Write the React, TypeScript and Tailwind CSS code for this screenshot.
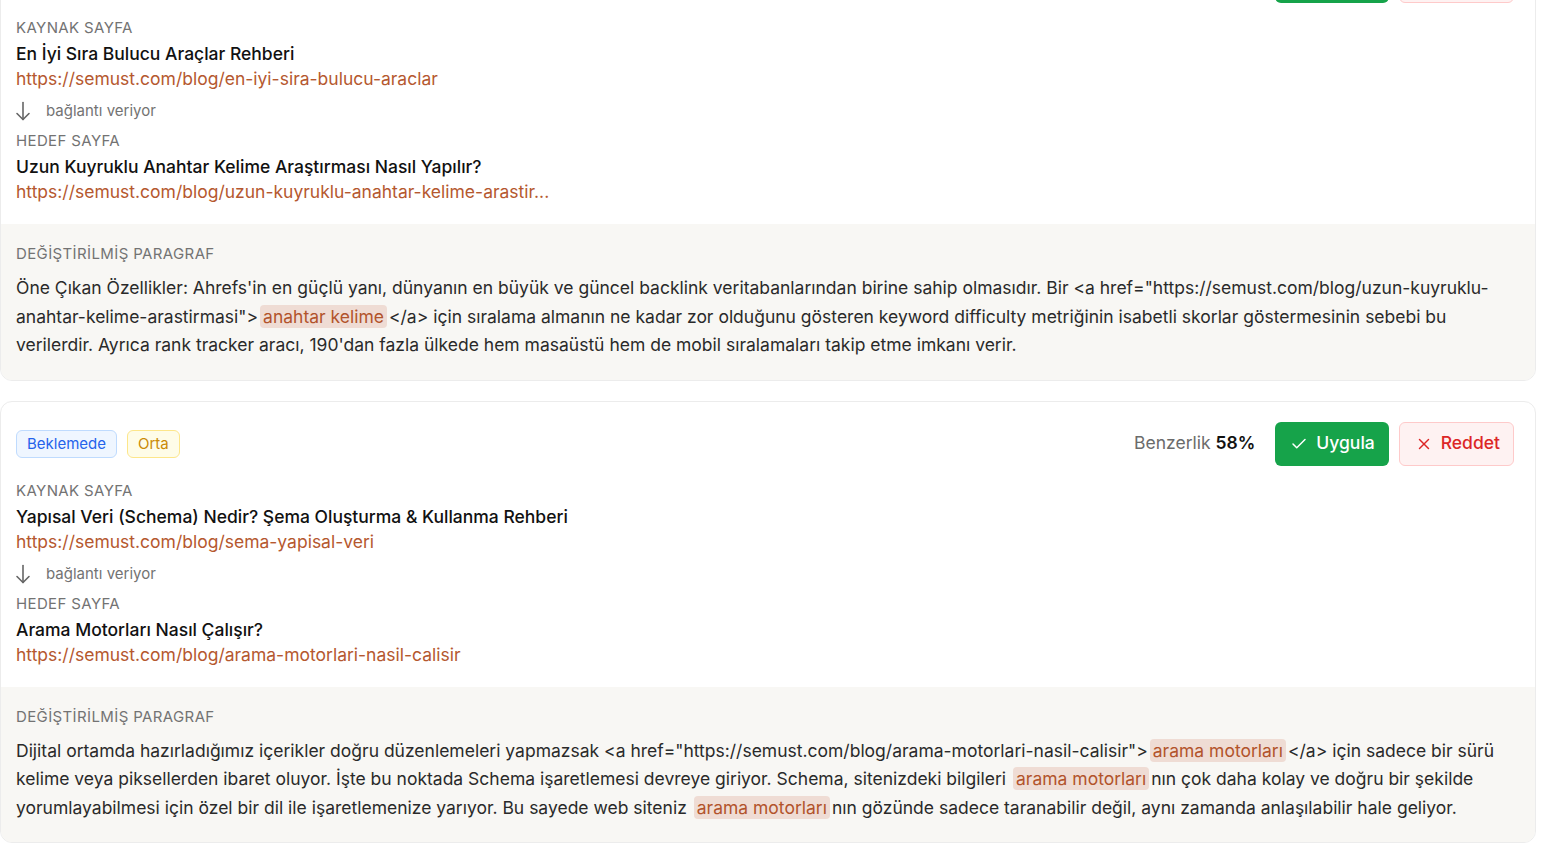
import { Check, X } from 'lucide-react'

type Part = string | { hl: string }

interface Suggestion {
  id: number
  status?: string
  level?: string
  similarity?: number
  sourceTitle: string
  sourceUrl: string
  targetTitle: string
  targetUrl: string
  paragraph: Part[]
}

const suggestions: Suggestion[] = [
  {
    id: 1,
    status: 'Beklemede',
    level: 'Orta',
    similarity: 61,
    sourceTitle: 'En İyi Sıra Bulucu Araçlar Rehberi',
    sourceUrl: 'https://semust.com/blog/en-iyi-sira-bulucu-araclar',
    targetTitle: 'Uzun Kuyruklu Anahtar Kelime Araştırması Nasıl Yapılır?',
    targetUrl: 'https://semust.com/blog/uzun-kuyruklu-anahtar-kelime-arastir...',
    paragraph: [
      'Öne Çıkan Özellikler: Ahrefs\'in en güçlü yanı, dünyanın en büyük ve güncel backlink veritabanlarından birine sahip olmasıdır. Bir <a href="https://semust.com/blog/uzun-kuyruklu-anahtar-kelime-arastirmasi">',
      { hl: 'anahtar kelime' },
      '</a> için sıralama almanın ne kadar zor olduğunu gösteren keyword difficulty metriğinin isabetli skorlar göstermesinin sebebi bu verilerdir. Ayrıca rank tracker aracı, 190\'dan fazla ülkede hem masaüstü hem de mobil sıralamaları takip etme imkanı verir.',
    ],
  },
  {
    id: 2,
    status: 'Beklemede',
    level: 'Orta',
    similarity: 58,
    sourceTitle: 'Yapısal Veri (Schema) Nedir? Şema Oluşturma & Kullanma Rehberi',
    sourceUrl: 'https://semust.com/blog/sema-yapisal-veri',
    targetTitle: 'Arama Motorları Nasıl Çalışır?',
    targetUrl: 'https://semust.com/blog/arama-motorlari-nasil-calisir',
    paragraph: [
      'Dijital ortamda hazırladığımız içerikler doğru düzenlemeleri yapmazsak <a href="https://semust.com/blog/arama-motorlari-nasil-calisir">',
      { hl: 'arama motorları' },
      '</a> için sadece bir sürü kelime veya piksellerden ibaret oluyor. İşte bu noktada Schema işaretlemesi devreye giriyor. Schema, sitenizdeki bilgileri ',
      { hl: 'arama motorları' },
      'nın çok daha kolay ve doğru bir şekilde yorumlayabilmesi için özel bir dil ile işaretlemenize yarıyor. Bu sayede web siteniz ',
      { hl: 'arama motorları' },
      'nın gözünde sadece taranabilir değil, aynı zamanda anlaşılabilir hale geliyor.',
    ],
  },
]

function LinkArrow() {
  return (
    <svg
      viewBox="0 0 24 24"
      className="-my-0.5 -ml-[5px] h-6 w-6 text-[#666]"
      fill="none"
      stroke="currentColor"
      strokeWidth={1.6}
      strokeLinecap="round"
      strokeLinejoin="round"
    >
      <path d="M12 3.5v17" />
      <path d="M18 14.5l-6 6-6-6" />
    </svg>
  )
}

function PageBlock({ label, title, url }: { label: string; title: string; url: string }) {
  return (
    <div>
      <div className="text-[15px] leading-5 tracking-wide text-[#737373] uppercase">{label}</div>
      <div className="mt-[3px] text-[17.5px] leading-[25px] font-medium text-[#111]">{title}</div>
      <div className="text-[17.5px] leading-[25px] text-[#b5582f]">{url}</div>
    </div>
  )
}

function SuggestionCard({ item, first }: { item: Suggestion; first?: boolean }) {
  return (
    <div
      className={`overflow-hidden rounded-xl border border-[#ececec] bg-white ${
        first ? '-mt-[62px]' : 'mt-5'
      }`}
    >
      <div className="pt-5 pr-[21px] pb-5 pl-[15px]">
        <div className="flex h-11 items-center justify-between">
          <div className="flex items-center gap-2.5">
            <span className="rounded-md border border-[#bfdbfe] bg-[#eff6ff] px-2.5 py-[3px] text-[15px] leading-5 text-[#2563eb]">
              {item.status}
            </span>
            <span className="rounded-md border border-[#fde68a] bg-[#fefce8] px-2.5 py-[3px] text-[15px] leading-5 text-[#ca8a04]">
              {item.level}
            </span>
          </div>
          <div className="flex items-center gap-2.5">
            <span className="mr-2.5 text-[17.5px] text-[#6b6b6b]">
              Benzerlik <span className="font-semibold text-[#111]">{item.similarity}%</span>
            </span>
            <button className="flex h-11 items-center gap-2 rounded-md bg-[#16a34a] pr-[14px] pl-[15px] text-[17.5px] font-medium text-white">
              <Check className="h-[18px] w-[18px]" strokeWidth={2} />
              Uygula
            </button>
            <button className="flex h-11 items-center gap-2 rounded-md border border-[#fecaca] bg-[#fef2f2] pr-[13px] pl-[15px] text-[17.5px] font-medium text-[#dc2626]">
              <X className="h-[18px] w-[18px]" strokeWidth={2} />
              Reddet
            </button>
          </div>
        </div>

        <div className="mt-[15px]">
          <PageBlock label="Kaynak Sayfa" title={item.sourceTitle} url={item.sourceUrl} />
        </div>
        <div className="mt-[10px] flex items-center gap-[11px] text-[15px] leading-5 text-[#737373]">
          <LinkArrow />
          bağlantı veriyor
        </div>
        <div className="mt-[10px]">
          <PageBlock label="Hedef Sayfa" title={item.targetTitle} url={item.targetUrl} />
        </div>
      </div>

      <div className="bg-[#f8f7f4] pt-5 pr-5 pb-5 pl-[15px]">
        <div className="text-[15px] leading-5 tracking-wide text-[#737373]">DEĞİŞTİRİLMİŞ PARAGRAF</div>
        <p className="mt-2.5 text-[17.5px] leading-[28.5px] text-[#2a2a2a]">
          {item.paragraph.map((part, i) =>
            typeof part === 'string' ? (
              <span key={i}>{part}</span>
            ) : (
              <span key={i} className="mx-[2px] rounded bg-[#efdcd4] px-[3px] py-[1px] text-[#b2532b]">
                {part.hl}
              </span>
            )
          )}
        </p>
      </div>
    </div>
  )
}

export default function App() {
  return (
    <div className="h-[852px] w-full overflow-hidden bg-white font-['Inter','Noto_Sans',sans-serif]">
      <div className="w-[1536px]">
        {suggestions.map((s, i) => (
          <SuggestionCard key={s.id} item={s} first={i === 0} />
        ))}
      </div>
    </div>
  )
}
